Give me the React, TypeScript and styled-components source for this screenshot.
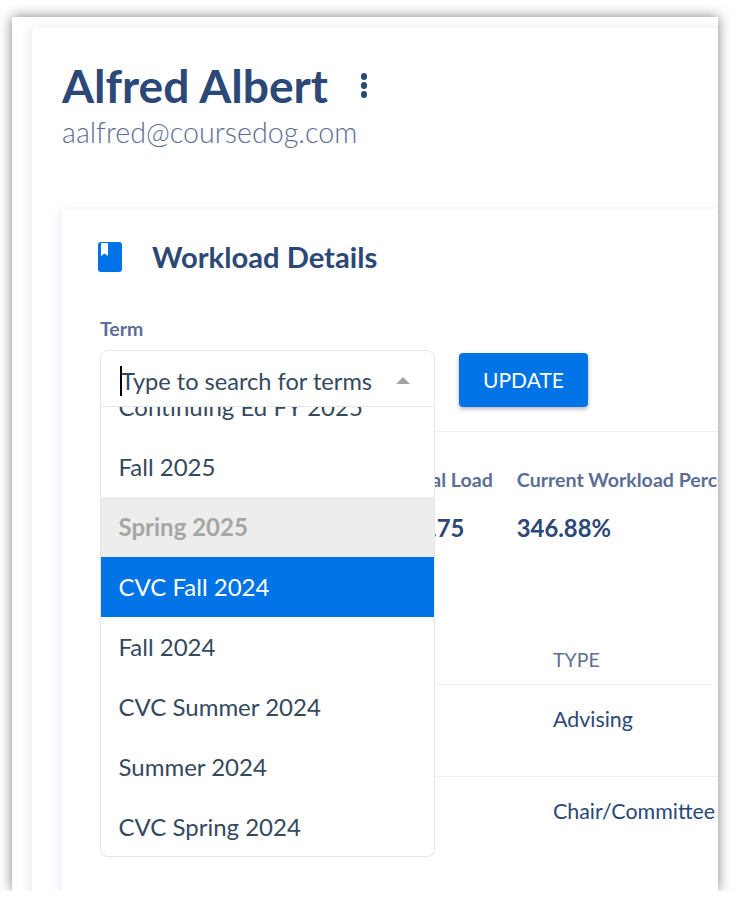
import React from 'react';
import styled, { createGlobalStyle } from 'styled-components';

const GlobalStyle = createGlobalStyle`
    html, body {
        margin: 0;
        padding: 0;
        background: #fff;
        font-family: Lato, "Open Sans", sans-serif;
    }
`;

const Frame = styled.div`
    width: 706px;
    height: 874px;
    margin: 17px 0 0 12px;
    background: #fff;
    box-shadow: 0 0 12px rgba(0, 0, 0, 0.5);
    overflow: hidden;
    display: flex;
`;

const Page = styled.div`
    flex: none;
    width: 800px;
    height: 900px;
    margin: 11px 0 0 20px;
    padding: 1px 0 0 30px;
    box-sizing: border-box;
    background: #fff;
    border-radius: 4px;
    box-shadow: -3px 0 10px rgba(80, 100, 190, 0.12);
`;

const ProfileHead = styled.div`
    display: flex;
    align-items: center;
    gap: 33px;
    height: 56px;
    margin-top: 28px;
`;

const Name = styled.h1`
    margin: 0;
    font-size: 46.2px;
    line-height: 56px;
    font-weight: 700;
    color: #2b4877;
`;

const MoreDots = styled.button`
    display: flex;
    flex-direction: column;
    gap: 2.5px;
    padding: 0;
    margin-top: 1px;
    border: 0;
    background: none;
`;

const Dot = styled.span`
    width: 6.5px;
    height: 6.5px;
    border-radius: 50%;
    background: #2b4877;
`;

const Email = styled.div`
    margin-top: 1px;
    font-size: 28.7px;
    line-height: 36px;
    font-weight: 300;
    color: #5d6e95;
`;

const Card = styled.section`
    margin-top: 59px;
    width: 740px;
    height: 720px;
    padding: 0 0 0 38px;
    box-sizing: border-box;
    background: #fff;
    border-radius: 4px;
    box-shadow: -3px 0 10px rgba(80, 100, 190, 0.1);
`;

const CardHead = styled.div`
    display: flex;
    align-items: center;
    gap: 30px;
    height: 40px;
    padding-top: 28px;
    margin-left: -2px;
`;

const CardTitle = styled.h2`
    margin: 0;
    font-size: 29.2px;
    line-height: 40px;
    font-weight: 700;
    color: #2b4877;
`;

const Label = styled.div`
    margin-top: 41px;
    font-size: 19.5px;
    line-height: 22px;
    font-weight: 700;
    color: #5d6e95;
`;

const FilterRow = styled.div`
    display: flex;
    align-items: flex-start;
    gap: 24px;
    margin-top: 10px;
`;

const Select = styled.div`
    position: relative;
    width: 335px;
    height: 57px;
    box-sizing: border-box;
    flex: none;
    display: flex;
    align-items: center;
    padding: 4px 24px 0 19px;
    background: #fff;
    border: 1px solid #e3e6ea;
    border-radius: 8px 8px 0 0;
    z-index: 2;
`;

const Caret = styled.span`
    flex: none;
    width: 2px;
    height: 30px;
    background: #000;
`;

const Placeholder = styled.span`
    flex: 1;
    margin-left: -1px;
    font-size: 23.6px;
    line-height: 30px;
    color: #35495e;
`;

const Arrow = styled.span`
    width: 0;
    height: 0;
    border-left: 7.5px solid transparent;
    border-right: 7.5px solid transparent;
    border-bottom: 7px solid #a3a3a3;
`;

const Menu = styled.div`
    position: absolute;
    left: -1px;
    right: -1px;
    top: 56px;
    height: 450px;
    overflow: hidden;
    background: #fff;
    border: 1px solid #e3e6ea;
    border-top: 0;
    border-radius: 0 0 8px 8px;
    box-sizing: border-box;
`;

const MenuList = styled.div`
    margin-top: -30px;
`;

const Option = styled.div<{ $state?: 'disabled' | 'active' }>`
    height: 60px;
    box-sizing: border-box;
    padding: 0 17.5px 2px;
    display: flex;
    align-items: center;
    font-size: 24px;
    font-weight: ${(p) => (p.$state === 'disabled' ? 700 : 400)};
    color: ${(p) =>
        p.$state === 'disabled'
            ? '#a6a6a6'
            : p.$state === 'active'
              ? '#fff'
              : '#35495e'};
    background: ${(p) =>
        p.$state === 'disabled'
            ? '#ededed'
            : p.$state === 'active'
              ? '#0073e6'
              : 'transparent'};
`;

const UpdateButton = styled.button`
    flex: none;
    width: 129px;
    height: 54px;
    margin-top: 3px;
    padding: 0 0 2px;
    border: 0;
    border-radius: 4px;
    background: #0073e6;
    color: #fff;
    font-family: inherit;
    font-size: 21px;
    box-shadow: 0 2px 4px rgba(0, 0, 0, 0.3);
`;

const Divider = styled.div`
    margin-top: 24px;
    height: 1px;
    background: #eef0f3;
`;

const Stats = styled.div`
    display: flex;
    gap: 24px;
    padding-left: 303.5px;
    margin-top: 36px;
`;

const Stat = styled.div`
    flex: none;
`;

const StatLabel = styled.div`
    font-size: 19.6px;
    line-height: 24px;
    font-weight: 700;
    color: #5d6e95;
`;

const StatValue = styled.div`
    margin-top: 22px;
    font-size: 23.8px;
    line-height: 28px;
    font-weight: 700;
    color: #2b4877;
`;

const Table = styled.div`
    margin-top: 104px;
`;

const HeadRow = styled.div`
    height: 38px;
    padding-left: 453px;
    border-bottom: 1px solid #eef0f3;
    font-size: 19.5px;
    line-height: 28px;
    color: #5d6e95;
`;

const BodyRow = styled.div`
    height: 71px;
    padding: 20px 0 0 453px;
    font-size: 21.4px;
    line-height: 28px;
    color: #2b4877;

    & + & {
        border-top: 1px solid #eef0f3;
    }
`;

const options: { label: string; state?: 'disabled' | 'active' }[] = [
    { label: 'Continuing Ed FY 2025' },
    { label: 'Fall 2025' },
    { label: 'Spring 2025', state: 'disabled' },
    { label: 'CVC Fall 2024', state: 'active' },
    { label: 'Fall 2024' },
    { label: 'CVC Summer 2024' },
    { label: 'Summer 2024' },
    { label: 'CVC Spring 2024' },
];

const BookIcon = () => (
    <svg width="24" height="30" viewBox="0 0 24 30">
        <path
            d="M3 0h18a3 3 0 0 1 3 3v24a3 3 0 0 1-3 3H3a3 3 0 0 1-3-3V3a3 3 0 0 1 3-3z"
            fill="#0073e6"
        />
        <path d="M3 1h7v13l-3.500-2.500L3 14z" fill="#fff" />
    </svg>
);

const App = () => {
    return (
        <>
            <GlobalStyle />
            <Frame>
                <Page>
                    <ProfileHead>
                        <Name>Alfred Albert</Name>
                        <MoreDots>
                            <Dot />
                            <Dot />
                            <Dot />
                        </MoreDots>
                    </ProfileHead>
                    <Email>aalfred@coursedog.com</Email>
                    <Card>
                        <CardHead>
                            <BookIcon />
                            <CardTitle>Workload Details</CardTitle>
                        </CardHead>
                        <Label>Term</Label>
                        <FilterRow>
                            <Select>
                                <Caret />
                                <Placeholder>Type to search for terms</Placeholder>
                                <Arrow />
                                <Menu>
                                    <MenuList>
                                        {options.map((option) => (
                                            <Option key={option.label} $state={option.state}>
                                                {option.label}
                                            </Option>
                                        ))}
                                    </MenuList>
                                </Menu>
                            </Select>
                            <UpdateButton>UPDATE</UpdateButton>
                        </FilterRow>
                        <Divider />
                        <Stats>
                            <Stat>
                                <StatLabel>Total Load</StatLabel>
                                <StatValue>10.75</StatValue>
                            </Stat>
                            <Stat>
                                <StatLabel>Current Workload Percentage</StatLabel>
                                <StatValue>346.88%</StatValue>
                            </Stat>
                        </Stats>
                        <Table>
                            <HeadRow>TYPE</HeadRow>
                            <BodyRow>Advising</BodyRow>
                            <BodyRow>Chair/Committee</BodyRow>
                        </Table>
                    </Card>
                </Page>
            </Frame>
        </>
    );
};

export default App;
